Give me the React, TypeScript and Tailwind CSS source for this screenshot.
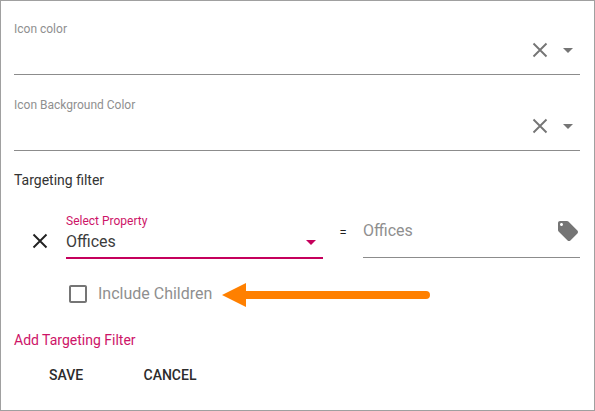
import React from "react";

function CloseIcon({ className }: { className: string }) {
  return (
    <svg viewBox="0 0 24 24" className={`h-6 w-6 shrink-0 fill-none stroke-current ${className}`}>
      <path d="M5.500 5.500 18.500 18.500M18.500 5.500 5.500 18.500" strokeWidth="1.900" />
    </svg>
  );
}

function CaretIcon({ className }: { className: string }) {
  return (
    <svg viewBox="0 0 24 24" className={`h-6 w-6 shrink-0 fill-current ${className}`}>
      <path d="m7 10 5 5 5-5z" />
    </svg>
  );
}

function ColorField({ label }: { label: string }) {
  return (
    <div className="flex h-[76px] flex-col border-b border-[#8c8c8c] pt-[22px]">
      <label className="h-4 text-xs leading-4 text-[#8f8f8f]">{label}</label>
      <div className="mt-px flex items-center justify-end gap-1 text-[#757575]">
        <CloseIcon className="" />
        <CaretIcon className="" />
      </div>
    </div>
  );
}

export default function App() {
  return (
    <div className="h-[411px] w-[595px] overflow-hidden border border-[#a0a0a0] bg-white pr-[14px] pl-[13px] font-['Roboto',sans-serif] text-[#212121]">
      <div className="-mt-0.5">
        <ColorField label="Icon color" />
        <ColorField label="Icon Background Color" />
      </div>

      <h2 className="mt-[19px] h-5 text-sm leading-5 text-[#333]">Targeting filter</h2>

      <div className="mt-[22px] flex h-[47px] pl-[14px]">
        <button className="mt-[17px] mr-[14px] h-6 w-6">
          <CloseIcon className="" />
        </button>
        <div className="flex w-[257px] flex-col border-b-2 border-[#c5005c]">
          <label className="mt-px h-4 text-xs leading-4 text-[#cd1468]">Select Property</label>
          <div className="mt-px flex h-6 items-center justify-between">
            <span className="text-base leading-6 text-[#3c3c3c]">Offices</span>
            <CaretIcon className="text-[#c5005c]" />
          </div>
        </div>
        <span className="w-10 pt-[13px] text-center text-[13px] leading-4">=</span>
        <div className="flex h-[46px] w-[217px] items-start justify-between border-b border-[#8c8c8c] pt-[7px]">
          <span className="text-base leading-6 text-[#8f8f8f]">Offices</span>
          <svg viewBox="0 0 24 24" className="h-6 w-6 fill-[#757575]">
            <path d="m21.41 11.58-9-9C12.05 2.22 11.55 2 11 2H4c-1.1 0-2 .9-2 2v7c0 .55.22 1.05.59 1.42l9 9c.36.36.86.58 1.41.58s1.05-.22 1.41-.59l7-7c.37-.36.59-.86.59-1.41s-.23-1.06-.59-1.42zM5.500 7C4.670 7 4 6.330 4 5.500S4.670 4 5.500 4 7 4.670 7 5.500 6.330 7 5.500 7z" />
          </svg>
        </div>
      </div>

      <div className="mt-[23px] flex h-6 items-center pl-[52px]">
        <svg viewBox="0 0 24 24" className="h-6 w-6 fill-[#757575]">
          <path d="M19 5v14H5V5h14m0-2H5c-1.100 0-2 .9-2 2v14c0 1.100.9 2 2 2h14c1.100 0 2-.9 2-2V5c0-1.100-.9-2-2-2z" />
        </svg>
        <span className="ml-2 w-[124px] text-base leading-6 text-[#8f8f8f]">Include Children</span>
        <svg viewBox="0 0 208 24" className="mt-0.5 h-6 w-[208px] fill-[#ff8000]">
          <path d="M0 12 24 0v8h180a4 4 0 0 1 0 8H24v8z" />
        </svg>
      </div>

      <button className="mt-6 block h-5 text-sm leading-5 text-[#cd1468]">Add Targeting Filter</button>
      <div className="mt-[15px] flex h-5 pl-[35px] text-sm leading-5 font-medium text-[#2c2c2c]">
        <button className="w-[94.5px] text-left">SAVE</button>
        <button>CANCEL</button>
      </div>
    </div>
  );
}
